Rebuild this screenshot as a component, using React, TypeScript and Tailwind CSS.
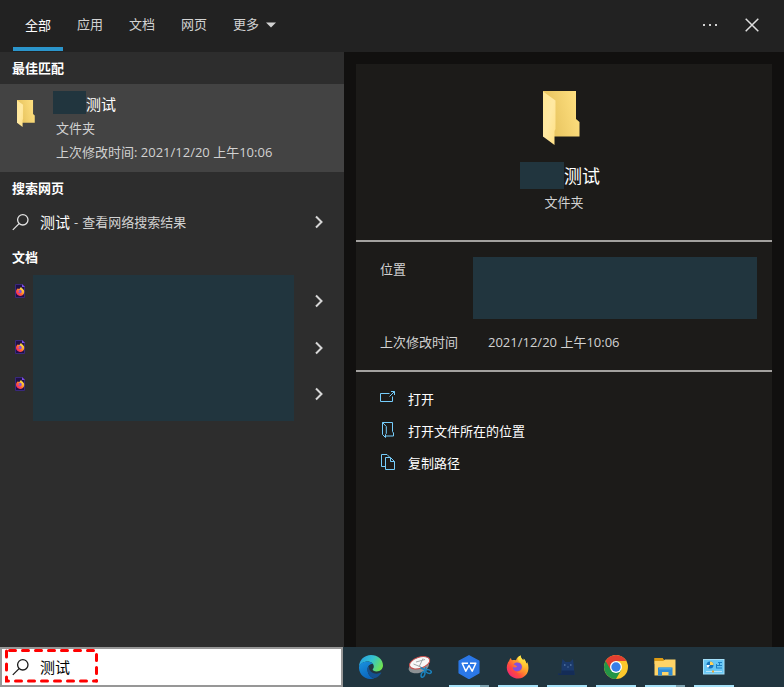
import { useState, type ReactNode } from 'react';

const tabs = ['全部', '应用', '文档', '网页'];

function Chevron() {
  return (
    <svg width="10" height="14" viewBox="0 0 10 14" fill="none" stroke="#d6d6d6" strokeWidth="2" aria-hidden="true">
      <path d="M2 1.5 7.5 7 2 12.5" />
    </svg>
  );
}

function SearchIcon({ color }: { color: string }) {
  return (
    <svg width="18" height="18" viewBox="0 0 18 18" fill="none" stroke={color} strokeWidth="1.3" aria-hidden="true">
      <circle cx="10.8" cy="6.8" r="5.2" />
      <path d="M7.1 10.6.8 16.9" />
    </svg>
  );
}

function FolderIcon({ width, height, id }: { width: number; height: number; id: string }) {
  return (
    <svg width={width} height={height} viewBox="0 0 37 54" preserveAspectRatio="none" aria-hidden="true">
      <defs>
        <linearGradient id={`${id}-back`} x1="0" y1="0.6" x2="1" y2="0.3">
          <stop offset="0.25" stopColor="#eac763" />
          <stop offset="1" stopColor="#ffe080" />
        </linearGradient>
        <linearGradient id={`${id}-flap`} x1="0" y1="0" x2="1" y2="1">
          <stop offset="0" stopColor="#ffe692" />
          <stop offset="0.5" stopColor="#ffe9a3" />
          <stop offset="1" stopColor="#ffdf83" />
        </linearGradient>
      </defs>
      <path d="M0 0H33V28L36.5 31V45.5H0Z" fill={`url(#${id}-back)`} />
      <path d="M0 .5 12.500 9.5V38L11.500 40V54L0 45.5Z" fill={`url(#${id}-flap)`} />
    </svg>
  );
}

function FirefoxFlame() {
  return (
    <>
      <path d="M3 6.5C3.4 4.8 4.2 3.5 5 3c0 1 .3 1.8 1 2.3 1.2-.6 2.8-.5 4 0C10.5 3 12.4 1 14.7.4c-.2 2.5 1.2 3.2 2.6 5 .5-.7.6-1.3.4-2 1.5 1.5 2.3 3.2 2.7 5.2.5-.4.7-.9.8-1.5 3.2 6.6.4 15.9-8.9 16.3C4.3 23.7-1.7 15.5 1.8 8c.2-1 .7-1.8 1.2-1.5Z" fill="url(#fx-body)" />
      <path d="M14.7.4c-.2 2.5 1.2 3.2 2.6 5 .5-.7.6-1.3.4-2 2.4 2.8 3.2 6.4 2.1 10-1.4 3.9-5.6 5.4-9 3.8 4.6-.3 6.4-3.6 5.6-6.4-.7-3-5-4.6-4.7-7.2.3-1.3 1.4-2.5 3-3.2Z" fill="url(#fx-light)" />
      <path d="M7.4 9.6c1.6-2.9 6.6-2.6 8 .2 1.6 3.3-.7 6.5-4 6.5-3 0-4.8-2.2-4.5-4.6 1.3 1.4 3 1 4.3-.2-1.6-.7-2.3-1.8-3.8-1.9Z" fill="#8350df" />
    </>
  );
}

function FirefoxIcon() {
  return (
    <svg width="24" height="24" viewBox="0 0 24 24" aria-hidden="true">
      <defs>
        <linearGradient id="fx-body" x1="0.9" y1="0.1" x2="0.1" y2="0.9">
          <stop offset="0" stopColor="#ffe43c" />
          <stop offset="0.4" stopColor="#ff9a2b" />
          <stop offset="0.7" stopColor="#ff4a3e" />
          <stop offset="1" stopColor="#f0237b" />
        </linearGradient>
        <linearGradient id="fx-light" x1="0.5" y1="0" x2="0.4" y2="1">
          <stop offset="0" stopColor="#fff04e" />
          <stop offset="0.6" stopColor="#ffbf2e" />
          <stop offset="1" stopColor="#ff7a2f" />
        </linearGradient>
      </defs>
      <FirefoxFlame />
    </svg>
  );
}

function FirefoxDocument() {
  return (
    <svg width="12" height="14" viewBox="0 0 12 14" aria-hidden="true">
      <path d="M1.500 .5H8L10.500 3v10.500h-9Z" fill="#211047" stroke="#39297c" />
      <path d="M8 0v3h3Z" fill="#7a4ce8" />
      <g transform="translate(1.700 3) scale(.38)">
        <FirefoxFlame />
      </g>
    </svg>
  );
}

function EdgeIcon() {
  return (
    <svg width="24" height="24" viewBox="0 0 24 24" aria-hidden="true">
      <defs>
        <linearGradient id="edge-top" x1="0" y1="0.2" x2="1" y2="0.6">
          <stop offset="0" stopColor="#279de0" />
          <stop offset="0.5" stopColor="#35c3d0" />
          <stop offset="1" stopColor="#70e34f" />
        </linearGradient>
        <linearGradient id="edge-left" x1="0" y1="0" x2="0.5" y2="1">
          <stop offset="0" stopColor="#1a93df" />
          <stop offset="1" stopColor="#0b66bd" />
        </linearGradient>
      </defs>
      <path d="M0 11.8C.2 5 5.400 0 12 0c6.800 0 12 4.800 12 10.300 0 3.900-3 6.200-6.300 6.200-2.500 0-4-1-4-1.900 0-.7 1.100-1.200 1.100-3C14.800 8.800 12 6.500 8.700 6.500 4.700 6.500 1.300 8.600 0 11.800Z" fill="url(#edge-top)" />
      <path d="M0 12.200C.4 8.700 4 6.500 8.300 6.500c2.800 0 5 1.200 6 2.800-3-.9-5.800 1.700-5.800 5.200 0 4.500 3.300 8.400 7 8.800C8.200 26-.3 20.800 0 12.200Z" fill="url(#edge-left)" />
      <path d="M10.300 10.700c-1.300 1-1.900 2.500-1.800 4.200.2 4.500 3.800 8.300 7.800 8.200 2.500-.9 4.800-2.800 6-5 .3-.5-.1-.8-.6-.5-4.800 2.500-11.100.3-11.600-4.500-.1-.9 0-1.700.2-2.400Z" fill="#14508f" />
    </svg>
  );
}

function SnipIcon() {
  return (
    <svg width="24" height="24" viewBox="0 0 24 24" aria-hidden="true">
      <g transform="rotate(-18 11 9)">
        <ellipse cx="10" cy="11.500" rx="10.500" ry="6" fill="#8d9194" />
        <ellipse cx="12" cy="8" rx="10.500" ry="5.500" fill="#f8f8f8" stroke="#c9504e" strokeWidth="1" />
      </g>
      <path d="m5.500 9 7.500 3M15 3.500l-4 8.500M8 7l9-2.500" stroke="#a2a6a8" fill="none" />
      <g fill="none" stroke="#1b82bd" strokeWidth="1.500">
        <ellipse cx="15" cy="19.500" rx="1.700" ry="2.900" transform="rotate(20 15 19.500)" />
        <ellipse cx="20.500" cy="16.500" rx="2.900" ry="1.700" transform="rotate(20 20.500 16.500)" />
        <path d="m12.500 12.500 5.500 3M18 12l-2 5" />
      </g>
    </svg>
  );
}

function WpsIcon() {
  return (
    <svg width="24" height="24" viewBox="0 0 24 24" aria-hidden="true">
      <path d="M12 .8 21.800 6.200v11.600L12 23.500l-9.800-5.700V6.200Z" fill="#2b78e8" stroke="#2b78e8" strokeLinejoin="round" strokeWidth="1.500" />
      <path d="M11 8.200H5.200l3.600 8L12 10.500l3.200 5.700 3.600-8H13" fill="none" stroke="#fff" strokeWidth="1.500" strokeLinejoin="round" />
    </svg>
  );
}

function CatIcon() {
  return (
    <svg width="24" height="24" viewBox="0 0 24 24" aria-hidden="true">
      <path d="M6.500 19.500V10L7.500 4l3 3h4.500l3-3 .8 7 .7 9H3.500L3 18.500Z" fill="#1b3a6c" />
      <path d="M6.500 15.500h12.600l.4 4.500h-16L3 18.500h3.500Z" fill="#142c57" />
      <path d="M9 10h1.500M15 10h1.500M12.500 12h1" stroke="#6f93bd" />
    </svg>
  );
}

function ChromeIcon() {
  return (
    <svg width="24" height="24" viewBox="0 0 24 24" aria-hidden="true">
      <circle cx="12" cy="12" r="12" fill="#fcc82c" />
      <path d="M12 12 1.610 6A12 12 0 0 0 12 24l5.200-9Z" fill="#239547" />
      <path d="M1.610 6A12 12 0 0 1 22.390 6H12L6.800 15Z" fill="#e33e30" />
      <circle cx="12" cy="12" r="6" fill="#fff" />
      <circle cx="12" cy="12" r="4.700" fill="#397ee9" />
    </svg>
  );
}

function ExplorerIcon() {
  return (
    <svg width="24" height="24" viewBox="0 0 24 24" aria-hidden="true">
      <path d="M1.500 3h8l1.500 2H22v4H1.500Z" fill="#e5a51c" />
      <path d="M1.500 6h9L12 4.500h10.500V20.500h-21Z" fill="#ffd467" />
      <path d="M1.500 3h8l1 1.500-1 1.500h-8Z" fill="#dd9b13" />
      <path d="M5 12.500h14.500v8h-4v-3.500H9v3.500H5Z" fill="#318bd2" />
      <path d="M6 12.500h12.500v2H6Z" fill="#45a6e8" />
    </svg>
  );
}

function ControlPanelIcon() {
  return (
    <svg width="24" height="24" viewBox="0 0 24 24" aria-hidden="true">
      <rect x="1.500" y="4.500" width="20.500" height="14.500" fill="#69c7f4" stroke="#a4e0fa" />
      <circle cx="8" cy="10" r="3.500" fill="#1674bd" />
      <path d="M8 10V6.500A3.500 3.500 0 0 1 11.500 10Z" fill="#ffd35a" />
      <path d="M8 10H4.500A3.500 3.500 0 0 0 6 12.900Z" fill="#fff" />
      <path d="M16 7.500h4M14 10.500h6M14 13h6" stroke="#1c80c4" />
      <path d="M14.500 9v4M17.500 7v3" stroke="#1c80c4" />
      <path d="M4 16.500h16" stroke="#b9e6fb" />
      <path d="M10 16.500h2" stroke="#e8a737" strokeWidth="2" />
    </svg>
  );
}

function OpenIcon() {
  return (
    <svg width="16" height="16" viewBox="0 0 16 16" fill="none" stroke="#76cdfb" aria-hidden="true">
      <path d="M9.500 3.500h-9v8h12v-5M9.500 6.500l5-5M11 1.500h3.500V5" />
    </svg>
  );
}

function OpenLocationIcon() {
  return (
    <svg width="16" height="16" viewBox="0 0 16 16" fill="none" stroke="#76cdfb" aria-hidden="true">
      <path d="M2.500 .5h10v9l1 1.500v3h-8M2.500 .5v12l3 3v-3l.8-1V4.500L2.500 .5" />
    </svg>
  );
}

function CopyPathIcon() {
  return (
    <svg width="16" height="16" viewBox="0 0 16 16" fill="none" stroke="#76cdfb" aria-hidden="true">
      <path d="M5.500 12.500h-4V.5h5.500L9.500 3M5.500 3.500h5l4 4v8h-9ZM10.500 3.500v4h4" />
    </svg>
  );
}

const actions: { label: string; icon: ReactNode }[] = [
  { label: '打开', icon: <OpenIcon /> },
  { label: '打开文件所在的位置', icon: <OpenLocationIcon /> },
  { label: '复制路径', icon: <CopyPathIcon /> },
];

const documents = [
  { row: 'h-14', block: 'mt-[2px]' },
  { row: 'h-[37px]', block: '' },
  { row: 'h-[55px]', block: '' },
];

const apps: { name: string; icon: ReactNode; running: boolean; stacked: boolean }[] = [
  { name: 'Microsoft Edge', icon: <EdgeIcon />, running: false, stacked: false },
  { name: '截图工具', icon: <SnipIcon />, running: false, stacked: false },
  { name: 'WPS', icon: <WpsIcon />, running: true, stacked: true },
  { name: 'Firefox', icon: <FirefoxIcon />, running: true, stacked: false },
  { name: '猫', icon: <CatIcon />, running: true, stacked: false },
  { name: 'Chrome', icon: <ChromeIcon />, running: true, stacked: false },
  { name: '文件资源管理器', icon: <ExplorerIcon />, running: true, stacked: true },
  { name: '控制面板', icon: <ControlPanelIcon />, running: true, stacked: false },
];

function SectionTitle({ children }: { children: ReactNode }) {
  return <h2 className="h-8 px-3 text-[13px] leading-8 font-bold text-white">{children}</h2>;
}

export default function App() {
  const [active, setActive] = useState('全部');
  const [query, setQuery] = useState('测试');

  return (
    <div className="flex min-h-screen flex-col bg-[#11100f] font-['Open_Sans','Noto_Sans_CJK_SC',sans-serif] text-[13px] leading-6 text-[#d2d2d2]">
      <header className="flex h-[52px] items-center justify-between bg-[#222222] pr-[25px] pl-[13px]">
        <nav className="flex h-full gap-[2px]">
          {tabs.map((tab) => (
            <button
              key={tab}
              onClick={() => setActive(tab)}
              className={`mb-[1px] border-b-4 px-3 ${tab === active ? 'border-[#2b95cb] pt-[2px] text-white' : 'border-transparent'}`}
            >
              {tab}
            </button>
          ))}
          <button className="mb-[1px] flex items-center gap-[7px] border-b-4 border-transparent px-3">
            更多
            <svg width="10" height="6" viewBox="0 0 10 6" fill="#d2d2d2" className="mt-[2px]" aria-hidden="true">
              <path d="M0 .5h10L5 5.500Z" />
            </svg>
          </button>
        </nav>
        <div className="flex items-center gap-[27px] pb-[2px]">
          <button aria-label="选项">
            <svg width="16" height="16" viewBox="0 0 16 16" fill="#d2d2d2" aria-hidden="true">
              <path d="M1 7h2v2H1ZM7 7h2v2H7ZM13 7h2v2h-2Z" />
            </svg>
          </button>
          <button aria-label="关闭">
            <svg width="14" height="14" viewBox="0 0 14 14" fill="none" stroke="#dedede" strokeWidth="1.500" aria-hidden="true">
              <path d="m.7.7 12.600 12.600M13.300.7.7 13.300" />
            </svg>
          </button>
        </div>
      </header>

      <main className="flex flex-1">
        <section className="w-[344px] shrink-0 bg-[#2d2d2d]">
          <SectionTitle>最佳匹配</SectionTitle>
          <button className="flex w-full items-start bg-[#434343] pt-[7px] pb-2 pl-[17px] text-left">
            <span className="mt-[9px] w-9 shrink-0">
              <FolderIcon width={18} height={27} id="small" />
            </span>
            <span className="flex flex-col">
              <span className="flex h-[25px] text-[15px] text-white">
                <span className="h-[23px] w-[33px] bg-[#21353e]" />
                <span className="pt-[1px]">测试</span>
              </span>
              <span className="pl-[3px]">文件夹</span>
              <span className="pl-[3px]">上次修改时间: 2021/12/20 上午10:06</span>
            </span>
          </button>

          <SectionTitle>搜索网页</SectionTitle>
          <button className="flex h-[37px] w-full items-center pr-5 pb-[2px] pl-3 text-left">
            <span className="w-7">
              <SearchIcon color="#e4e4e4" />
            </span>
            <span className="flex flex-1 items-center">
              <span className="text-[15px] text-white">测试</span>
              <span className="px-1">-</span>
              查看网络搜索结果
            </span>
            <Chevron />
          </button>

          <SectionTitle>文档</SectionTitle>
          <ul>
            {documents.map((doc, index) => (
              <li key={index}>
                <button aria-label={`文档 ${index + 1}`} className={`flex w-full pr-5 pl-[14px] ${doc.row}`}>
                  <span className="w-[19px] shrink-0 pt-[11px]">
                    <FirefoxDocument />
                  </span>
                  <span className={`w-[261px] self-stretch bg-[#21353e] ${doc.block}`} />
                  <span className="ml-auto self-center">
                    <Chevron />
                  </span>
                </button>
              </li>
            ))}
          </ul>
        </section>

        <section className="flex flex-1 flex-col px-3 pt-3">
          <div className="flex-1 bg-[#1c1b19]">
            <div className="flex h-[178px] flex-col items-center border-b-2 border-[#a3a19f] pt-[27px]">
              <span className="mr-[5px]">
                <FolderIcon width={37} height={54} id="large" />
              </span>
              <h1 className="mt-[17px] mr-2 flex h-7 text-[18px] leading-7 text-white">
                <span className="h-[27px] w-11 bg-[#21353e]" />
                测试
              </h1>
              <p>文件夹</p>
            </div>

            <dl className="grid h-[130px] grid-cols-[93px_1fr] content-start gap-y-[11px] border-b-2 border-[#a3a19f] pt-[15px] pr-[15px] pl-6">
              <dt>位置</dt>
              <dd className="h-[62px] bg-[#21353e]" />
              <dt>上次修改时间</dt>
              <dd className="pl-[15px]">2021/12/20 上午10:06</dd>
            </dl>

            <ul className="px-6 pt-[11px]">
              {actions.map((action) => (
                <li key={action.label}>
                  <button className="flex h-8 items-center gap-3 text-white">
                    <span className="pb-[2px]">{action.icon}</span>
                    {action.label}
                  </button>
                </li>
              ))}
            </ul>
          </div>
        </section>
      </main>

      <footer className="flex h-10 bg-[#21353f]">
        <label className="relative mr-[1px] flex w-[343px] shrink-0 items-center border-2 border-[#979797] bg-white pl-[10px]">
          <span className="w-7">
            <SearchIcon color="#1a1a1a" />
          </span>
          <input
            aria-label="搜索"
            value={query}
            onChange={(event) => setQuery(event.target.value)}
            className="min-w-0 flex-1 bg-transparent text-[15px] text-black outline-none"
          />
          <svg
            className="pointer-events-none absolute top-0 left-[3px]"
            width="93"
            height="34"
            viewBox="0 0 93 34"
            fill="none"
            stroke="#ff0000"
            strokeWidth="3"
            strokeLinecap="round"
            strokeDasharray="6 7"
            aria-hidden="true"
          >
            <path d="M4.500 1.500H91.500V32" />
            <path d="M1.500 2V32H91.500" />
          </svg>
        </label>
        <nav className="flex flex-1 gap-[9px] pl-[7px]">
          {apps.map((app) => (
            <button key={app.name} aria-label={app.name} className="flex w-10 flex-col items-center justify-between pt-2">
              {app.icon}
              <span className="flex h-[2px] w-full">
                {app.running && <span className="flex-1 bg-[#a5e1f8]" />}
                {app.stacked && <span className="w-[9px] bg-[#7ea3b1]" />}
              </span>
            </button>
          ))}
        </nav>
      </footer>
    </div>
  );
}
